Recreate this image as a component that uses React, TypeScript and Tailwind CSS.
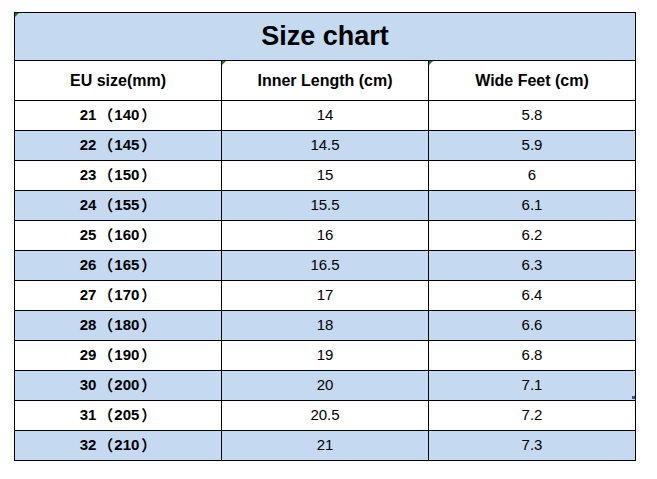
const rows: [string, string, string, string][] = [
  ["21", "140", "14", "5.8"],
  ["22", "145", "14.5", "5.9"],
  ["23", "150", "15", "6"],
  ["24", "155", "15.5", "6.1"],
  ["25", "160", "16", "6.2"],
  ["26", "165", "16.5", "6.3"],
  ["27", "170", "17", "6.4"],
  ["28", "180", "18", "6.6"],
  ["29", "190", "19", "6.8"],
  ["30", "200", "20", "7.1"],
  ["31", "205", "20.5", "7.2"],
  ["32", "210", "21", "7.3"],
];

const font = { fontFamily: '"Liberation Sans", Arial, "Noto Sans CJK SC", sans-serif' };
const cjk = { fontFamily: '"Noto Sans CJK SC", sans-serif' };

function Corner() {
  // little green marker Excel draws in a cell corner
  return (
    <span className="absolute left-0 top-0 h-0 w-0 border-t-[4px] border-r-[4px] border-t-[#1e7a1e] border-r-transparent" />
  );
}

export default function App() {
  return (
    <div className="min-h-[479px] w-[657px] bg-white pl-[14px] pt-[12px] text-black" style={font}>
      <div className="relative w-[622px] border-l border-t border-black">
        <div className="relative flex h-[48px] items-center justify-center border-b border-r border-black bg-[#c5d9f1] text-[27px] font-bold">
          <Corner />
          Size chart
        </div>
        <div className="grid grid-cols-[207px_207px_207px]">
          {["EU size(mm)", "Inner Length (cm)", "Wide Feet (cm)"].map((h, i) => (
            <div
              key={h}
              className="relative flex h-[40px] items-center justify-center border-b border-r border-black text-[16px] font-bold"
            >
              {i > 0 && <Corner />}
              {h}
            </div>
          ))}
          {rows.map((r, idx) => {
            const bg = idx % 2 === 1 ? "bg-[#c5d9f1]" : "bg-white";
            const cell = `relative flex h-[30px] items-center justify-center border-b border-r border-black text-[15px] ${bg}`;
            return [
              <div key={idx + "-a"} className={cell + " font-bold"}>
                {r[0]}
                <span className="ml-[2px] mr-[1px]" style={cjk}>（</span>
                {r[1]}
                <span className="ml-[2px]" style={cjk}>）</span>
              </div>,
              <div key={idx + "-b"} className={cell}>
                {r[2]}
              </div>,
              <div key={idx + "-c"} className={cell}>
                {r[3]}
                {idx === 9 && (
                  <span className="absolute bottom-[1px] right-0 h-[3px] w-[3px] bg-[#4b4b8f]" />
                )}
              </div>,
            ];
          })}
        </div>
      </div>
    </div>
  );
}
